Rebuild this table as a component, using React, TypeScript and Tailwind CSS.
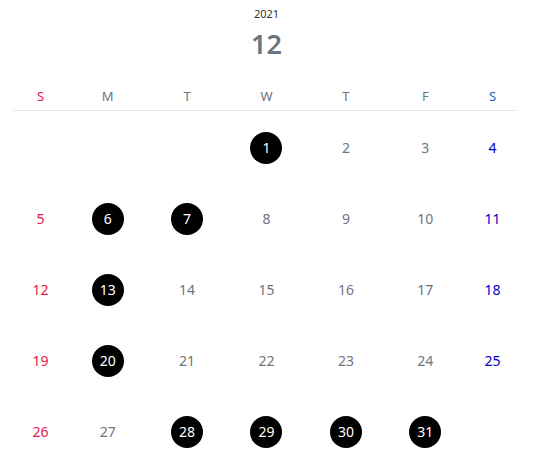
import React from 'react';

const weekDays = ['S', 'M', 'T', 'W', 'T', 'F', 'S'];
const marked = [1, 6, 7, 13, 20, 28, 29, 30, 31];

// December 2021 starts on Wednesday
const cells: (number | null)[] = [null, null, null, ...Array.from({ length: 31 }, (_, i) => i + 1)];

export default function App() {
  return (
    <div className="w-[553px] h-[474px] bg-white pt-[6px] font-['Noto_Sans',sans-serif]">
      <div className="mx-[13px] w-[507px]">
        <div className="text-center text-[11px] leading-4 text-[#333]">2021</div>
        <div className="mt-[4px] text-center text-[27px] leading-9 font-semibold text-[#6b7580]">12</div>
        <div className="mt-[24px] grid grid-cols-[55px_repeat(5,1fr)_55px] pb-1">
          {weekDays.map((d, i) => (
            <div
              key={i}
              className={
                'text-center text-[13px] leading-5 ' +
                (i === 0 ? 'text-[#e0194a]' : i === 6 ? 'text-[#1565c0]' : 'text-[#6b7580]')
              }
            >
              {d}
            </div>
          ))}
        </div>
        <div className="h-px w-[504px] bg-[#e3e7eb]" />
        <div className="grid grid-cols-[55px_repeat(5,1fr)_55px] pt-[1px]">
          {cells.map((n, i) => {
            const col = i % 7;
            const isMarked = n !== null && marked.includes(n);
            const color = isMarked
              ? 'bg-black text-white'
              : col === 0
                ? 'text-[#e0194a]'
                : col === 6
                  ? 'text-[#0000cc]'
                  : 'text-[#6b7580]';
            return (
              <div key={i} className="h-[71px] flex items-center justify-center">
                {n !== null && (
                  <span className={'w-8 h-8 rounded-full flex items-center justify-center text-[14px] ' + color}>
                    {n}
                  </span>
                )}
              </div>
            );
          })}
        </div>
      </div>
    </div>
  );
}
